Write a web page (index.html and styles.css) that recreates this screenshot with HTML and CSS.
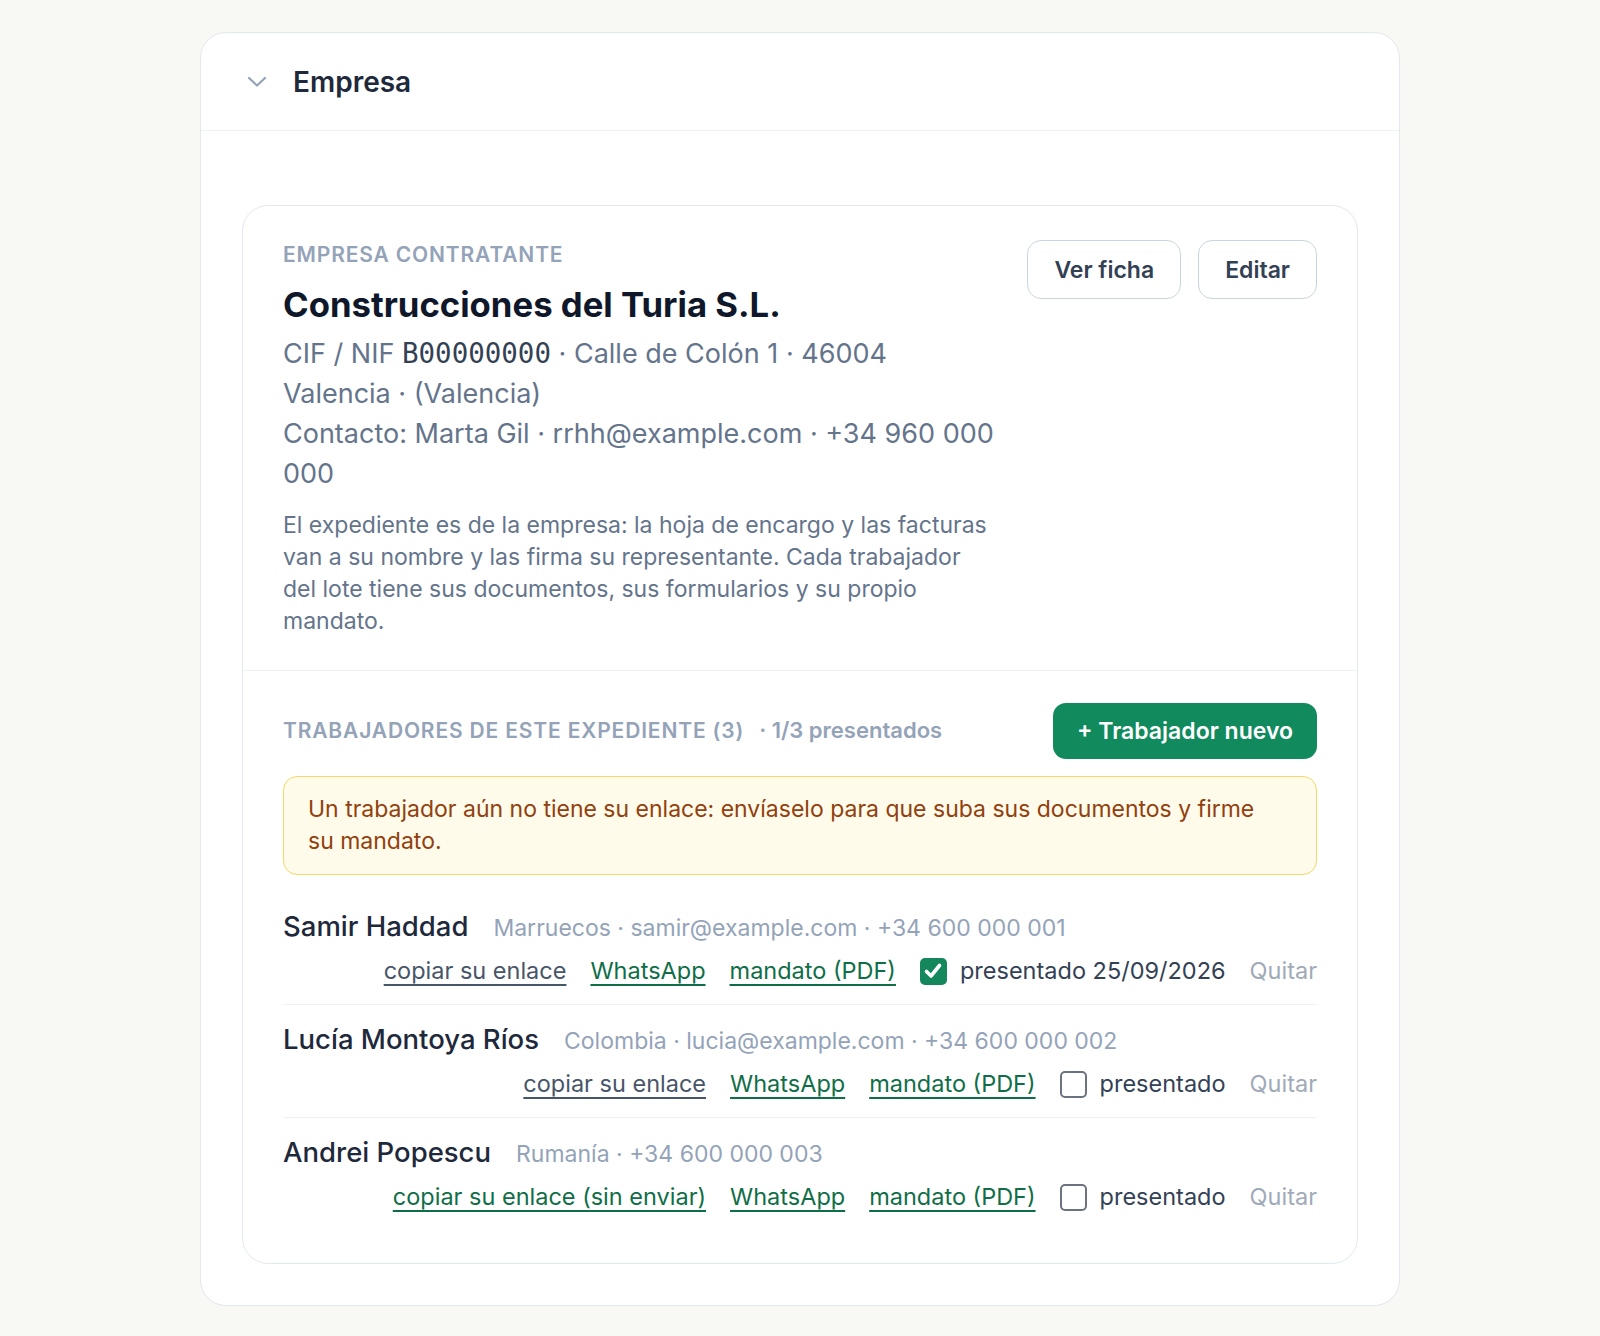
FILE: index.html
```html
<!DOCTYPE html>
<html lang="es">
<head>
    <meta charset="UTF-8">
    <meta name="viewport" content="width=device-width, initial-scale=1.0">
    <title>Expediente · Empresa</title>
    <link rel="stylesheet" href="styles.css">
</head>
<body>
<section class="panel">
    <header class="panel-head">
        <svg class="chevron" width="24" height="24" viewBox="0 0 24 24" fill="none" stroke="currentColor" stroke-width="2.2" stroke-linecap="round" stroke-linejoin="round">
            <polyline points="4 8 12 15.5 20 8"></polyline>
        </svg>
        <h2>Empresa</h2>
    </header>

    <div class="panel-body">
        <div class="company-card">
            <div class="company-top">
                <div class="company-text">
                    <div class="eyebrow">Empresa contratante</div>
                    <h3 class="company-name">Construcciones del Turia S.L.</h3>
                    <div class="company-meta">
                        CIF / NIF <span class="mono">B00000000</span> · Calle de Colón 1 · 46004 Valencia · (Valencia)
                    </div>
                    <div class="company-meta">Contacto: Marta Gil · rrhh@example.com · +34 960 000 000</div>
                    <p class="company-note">
                        El expediente es de la empresa: la hoja de encargo y las facturas van a su nombre y las firma
                        su representante. Cada trabajador del lote tiene sus documentos, sus formularios y su propio
                        mandato.
                    </p>
                </div>
                <div class="company-actions">
                    <button class="btn-outline">Ver ficha</button>
                    <button class="btn-outline">Editar</button>
                </div>
            </div>

            <div class="workers">
                <div class="workers-head">
                    <div class="workers-title">
                        <span class="eyebrow">Trabajadores de este expediente (3)</span>
                        <span class="workers-count">· 1/3 presentados</span>
                    </div>
                    <button class="btn-green">+ Trabajador nuevo</button>
                </div>

                <div class="notice">
                    Un trabajador aún no tiene su enlace: envíaselo para que suba sus documentos y firme su mandato.
                </div>

                <ul class="worker-list">
                    <li class="worker">
                        <div class="worker-line">
                            <span class="worker-name">Samir Haddad</span>
                            <span class="worker-meta">Marruecos · samir@example.com · +34 600 000 001</span>
                        </div>
                        <div class="worker-actions">
                            <a href="#" class="link-muted">copiar su enlace</a>
                            <a href="#" class="link">WhatsApp</a>
                            <a href="#" class="link">mandato (PDF)</a>
                            <label class="check">
                                <span class="box checked">
                                    <svg width="22" height="22" viewBox="0 0 22 22" fill="none" stroke="#fff" stroke-width="3.6" stroke-linecap="round" stroke-linejoin="round"><polyline points="4.5 11.5 9 16 17.5 5.5"></polyline></svg>
                                </span>
                                presentado 25/09/2026
                            </label>
                            <a href="#" class="remove">Quitar</a>
                        </div>
                    </li>
                    <li class="worker">
                        <div class="worker-line">
                            <span class="worker-name">Lucía Montoya Ríos</span>
                            <span class="worker-meta">Colombia · lucia@example.com · +34 600 000 002</span>
                        </div>
                        <div class="worker-actions">
                            <a href="#" class="link-muted">copiar su enlace</a>
                            <a href="#" class="link">WhatsApp</a>
                            <a href="#" class="link">mandato (PDF)</a>
                            <label class="check"><span class="box"></span> presentado</label>
                            <a href="#" class="remove">Quitar</a>
                        </div>
                    </li>
                    <li class="worker">
                        <div class="worker-line">
                            <span class="worker-name">Andrei Popescu</span>
                            <span class="worker-meta">Rumanía · +34 600 000 003</span>
                        </div>
                        <div class="worker-actions">
                            <a href="#" class="link">copiar su enlace (sin enviar)</a>
                            <a href="#" class="link">WhatsApp</a>
                            <a href="#" class="link">mandato (PDF)</a>
                            <label class="check"><span class="box"></span> presentado</label>
                            <a href="#" class="remove">Quitar</a>
                        </div>
                    </li>
                </ul>
            </div>
        </div>
    </div>
</section>
</body>
</html>
```

FILE: styles.css
```css
body {
    margin: 0;
    padding: 32px 0;
    background-color: #f8f8f4;
    font-family: Inter, "Noto Sans", sans-serif;
    color: #1e293b;
}

.panel {
    width: 1200px;
    margin: 0 auto;
    box-sizing: border-box;
    background: #fff;
    border: 1px solid #e2e8f0;
    border-radius: 26px;
}

.panel-head {
    display: flex;
    align-items: center;
    gap: 24px;
    height: 97px;
    padding: 0 44px;
    border-bottom: 1px solid #eef2f6;
}

.chevron {
    color: #94a3b8;
}

.panel-head h2 {
    margin: 0;
    font-size: 28px;
    font-weight: 600;
    color: #1e293b;
}

.panel-body {
    padding: 74px 41px 41px;
}

.company-card {
    border: 1.5px solid #e2e8f0;
    border-radius: 26px;
}

.company-top {
    display: flex;
    align-items: flex-start;
    padding: 34px 40px 33px;
    border-bottom: 1px solid #eef2f6;
}

.company-text {
    max-width: 712px;
}

.company-actions {
    display: flex;
    gap: 17px;
    margin-left: auto;
}

.eyebrow {
    font-size: 21px;
    font-weight: 600;
    letter-spacing: 0.04em;
    text-transform: uppercase;
    color: #94a3b8;
    line-height: 30px;
}

.company-name {
    margin: 11px 0 7px;
    font-size: 34.7px;
    font-weight: 700;
    color: #0f172a;
    line-height: 46px;
}

.company-meta {
    font-size: 27px;
    line-height: 40px;
    color: #64748b;
}

.mono {
    font-family: "DejaVu Sans Mono", monospace;
    font-size: 27.5px;
    line-height: 1;
    color: #334155;
}

.company-note {
    margin: 15px 0 0;
    font-size: 23px;
    line-height: 32px;
    color: #64748b;
}

.btn-outline {
    height: 59px;
    padding: 0 26px;
    background: #fff;
    border: 1.5px solid #cbd5e1;
    border-radius: 14px;
    font-family: inherit;
    font-size: 23px;
    font-weight: 600;
    color: #334155;
    cursor: pointer;
}

.workers {
    display: flex;
    flex-direction: column;
    gap: 17px;
    padding: 32px 40px 33px;
}

.workers-head {
    display: flex;
    align-items: center;
    justify-content: space-between;
}

.workers-title {
    display: flex;
    align-items: baseline;
    gap: 15px;
}

.workers-count {
    font-size: 22px;
    font-weight: 600;
    color: #94a3b8;
}

.btn-green {
    height: 56px;
    padding: 0 24px;
    background: #118a5d;
    border: none;
    border-radius: 13px;
    font-family: inherit;
    font-size: 23px;
    font-weight: 600;
    color: #fff;
    cursor: pointer;
}

.notice {
    padding: 16px 36px 17px 24px;
    background: #fefbea;
    border: 1.5px solid #f5d867;
    border-radius: 14px;
    font-size: 23px;
    line-height: 32px;
    color: #92400e;
}

.worker-list {
    list-style: none;
    margin: 0;
    padding: 0;
}

.worker {
    display: flex;
    flex-direction: column;
    gap: 9px;
    padding: 16px 0 15px;
    border-bottom: 1px solid #eef2f6;
}

.worker:last-child {
    border-bottom: none;
}

.worker-line {
    display: flex;
    align-items: baseline;
    gap: 25px;
    height: 36px;
    line-height: 36px;
}

.worker-name {
    font-size: 27.5px;
    font-weight: 500;
    color: #1e293b;
}

.worker-meta {
    font-size: 23px;
    color: #94a3b8;
}

.worker-actions {
    display: flex;
    justify-content: flex-end;
    align-items: center;
    gap: 24px;
    height: 36px;
    font-size: 23.5px;
    line-height: 36px;
}

.worker-actions a {
    text-decoration: underline;
    text-decoration-thickness: 2px;
    text-underline-offset: 5px;
}

.link {
    color: #0f6e48;
}

.link-muted {
    color: #475569;
}

.check {
    display: flex;
    align-items: center;
    gap: 13px;
    color: #334155;
}

.box {
    display: flex;
    align-items: center;
    justify-content: center;
    width: 27px;
    height: 27px;
    box-sizing: border-box;
    border: 2px solid #6b7280;
    border-radius: 5px;
    background: #fff;
}

.box.checked {
    background: #14875c;
    border-color: #14875c;
}

.worker-actions .remove {
    color: #a0aab8;
    text-decoration: none;
}
```
